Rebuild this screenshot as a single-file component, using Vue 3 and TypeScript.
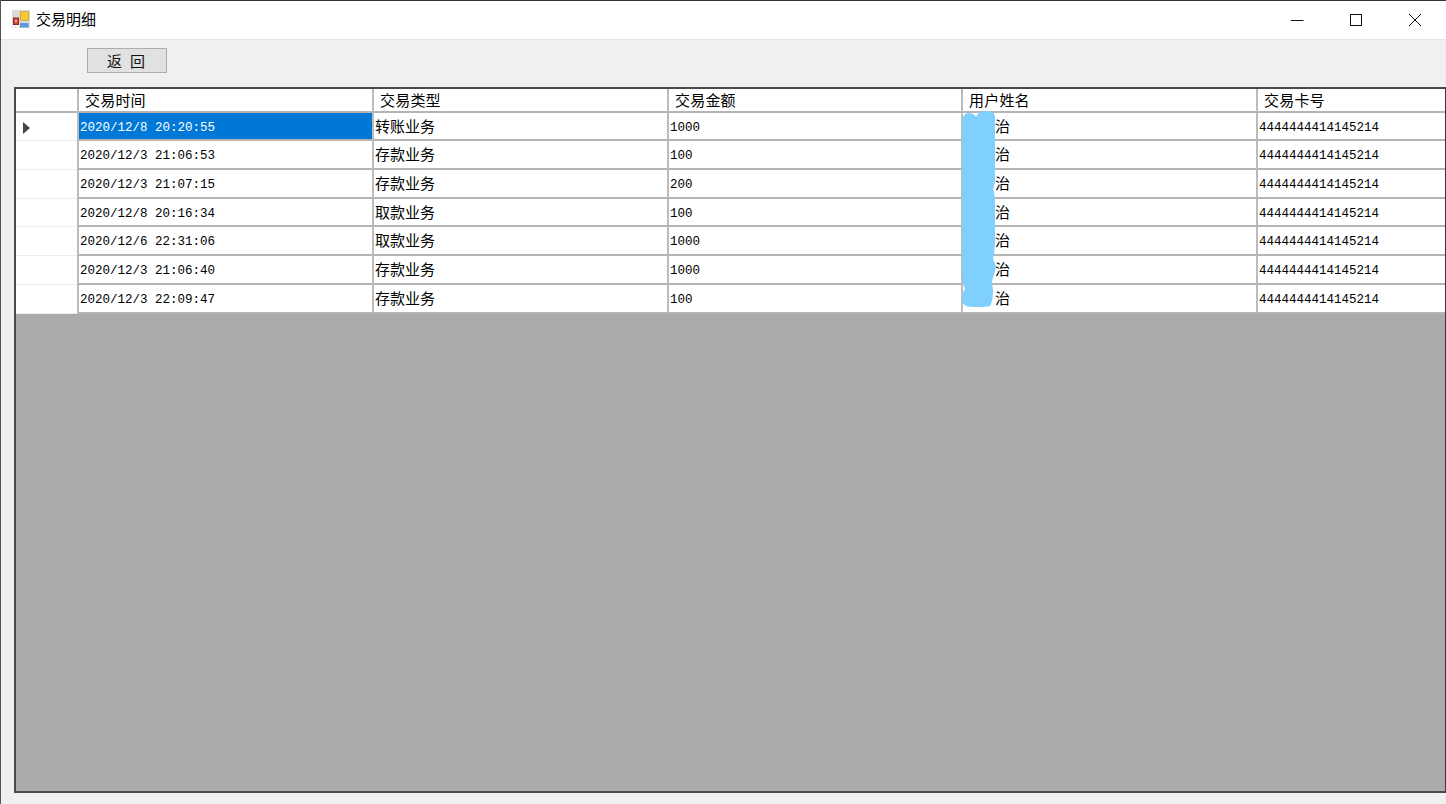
<script setup lang="ts">
interface Row { time: string; type: string; amount: string; name: string; card: string }
const headers: string[] = ['交易时间', '交易类型', '交易金额', '用户姓名', '交易卡号']
const rows: Row[] = [
  { time: '2020/12/8 20:20:55', type: '转账业务', amount: '1000', name: '治', card: '4444444414145214' },
  { time: '2020/12/3 21:06:53', type: '存款业务', amount: '100', name: '治', card: '4444444414145214' },
  { time: '2020/12/3 21:07:15', type: '存款业务', amount: '200', name: '治', card: '4444444414145214' },
  { time: '2020/12/8 20:16:34', type: '取款业务', amount: '100', name: '治', card: '4444444414145214' },
  { time: '2020/12/6 22:31:06', type: '取款业务', amount: '1000', name: '治', card: '4444444414145214' },
  { time: '2020/12/3 21:06:40', type: '存款业务', amount: '1000', name: '治', card: '4444444414145214' },
  { time: '2020/12/3 22:09:47', type: '存款业务', amount: '100', name: '治', card: '4444444414145214' },
]
</script>

<template>
  <div class="window">
    <header class="titlebar">
      <svg class="app-icon" width="18" height="18" viewBox="0 0 18 18">
        <rect x="0" y="0" width="18" height="18" fill="#dcdad2" />
        <rect x="0.5" y="14.5" width="3" height="3" fill="#fff" />
        <rect x="4" y="15" width="3" height="2.5" fill="#fff" />
        <rect x="1" y="7.5" width="6" height="7.5" fill="#8e2a26" />
        <rect x="2" y="8.5" width="4" height="5.5" fill="#d9423a" />
        <rect x="3" y="10" width="2" height="2" fill="#f0b0a8" />
        <rect x="8" y="1.5" width="9" height="9" fill="#b08a20" />
        <rect x="8.5" y="2" width="8" height="8" fill="#f6c832" />
        <rect x="8" y="13" width="8.5" height="4.5" fill="#5f97dd" />
      </svg>
      <span class="title">交易明细</span>
      <div class="controls">
        <svg class="ctl" width="58" height="37" viewBox="0 0 58 37"><path d="M22 19.5h12.5" stroke="#111" fill="none" /></svg>
        <svg class="ctl" width="58" height="37" viewBox="0 0 58 37"><rect x="23.5" y="13.5" width="11" height="11" stroke="#111" fill="none" /></svg>
        <svg class="ctl" width="59" height="37" viewBox="0 0 59 37"><path d="M24 13l12 12M36 13L24 25" stroke="#111" fill="none" /></svg>
      </div>
    </header>
    <div class="toolbar">
      <button class="back" type="button">返 回</button>
    </div>
    <section class="grid">
      <div class="row head">
        <div class="cell corner"></div>
        <div v-for="h in headers" :key="h" class="cell hcell">{{ h }}</div>
      </div>
      <div v-for="(r, i) in rows" :key="i" class="row body">
        <div class="cell rowhead"><span v-if="i === 0" class="caret"></span></div>
        <div class="cell mono" :class="{ selected: i === 0 }">{{ r.time }}</div>
        <div class="cell">{{ r.type }}</div>
        <div class="cell mono">{{ r.amount }}</div>
        <div class="cell name">{{ r.name }}</div>
        <div class="cell mono">{{ r.card }}</div>
      </div>
      <svg class="blob" width="36" height="198" viewBox="0 0 36 198">
        <path d="M0 9 Q1 3 6 2 Q12 2 14 6 Q16 0 24 0 Q32 0 33 5 L33 70 Q32 76 31 78 Q33 82 33 95 L33 125 Q33 140 31 148 Q33 152 34 156 Q32 164 30 170 L31 180 Q31 190 28 195 Q25 196 10 196 Q0 196 0 188 Q0 182 3 178 Q0 172 0 160 Z" fill="#7fcfff" />
      </svg>
    </section>
  </div>
</template>

<style>
html, body { margin: 0; padding: 0; background: #f0f0f0; }
</style>

<style scoped>
.window {
  width: 1446px;
  height: 804px;
  display: flex;
  flex-direction: column;
  box-sizing: border-box;
  border-left: 1px solid #5a5050;
  background: #f0f0f0;
  overflow: hidden;
  font-family: "Noto Sans CJK SC", "Liberation Sans", sans-serif;
  color: #000;
}
.titlebar {
  height: 40px;
  flex: none;
  background: #fff;
  display: flex;
  align-items: center;
  padding: 0 2px 2px 11px;
  border-bottom: 1px solid #e6e6e6;
  border-top: 1px solid #3a3230;
  box-sizing: border-box;
}
.app-icon { margin-right: 6px; }
.title { font-size: 15px; line-height: 20px; }
.controls { margin-left: auto; display: flex; }
.ctl { display: block; }
.toolbar {
  height: 47px;
  flex: none;
  padding: 8px 0 0 86px;
  box-sizing: border-box;
}
.back {
  width: 80px;
  height: 25px;
  padding: 0 2px 0 0;
  background: #e1e1e1;
  border: 1px solid #adadad;
  font: inherit;
  font-size: 15px;
  line-height: 21px;
  color: #111;
  word-spacing: 4.7px;
}
.grid {
  position: relative;
  margin-left: 13px;
  height: 706px;
  flex: none;
  box-sizing: border-box;
  background: #ababab;
  border: 2px solid #4a4a4a;
  border-right: 1px solid #3a3535;
  overflow: hidden;
}
.row {
  display: grid;
  grid-template-columns: 61px 295px 295px 294px 295px 1fr;
  background: #fff;
}
.head { height: 23.7px; }
.body { height: 28.7px; }
.cell {
  border-left: 2px solid #bcbcbc;
  border-bottom: 2px solid #b4b4b4;
  box-sizing: border-box;
  padding-left: 1px;
  font-size: 15px;
  line-height: 25px;
  white-space: nowrap;
  overflow: hidden;
}
.corner, .rowhead { border-left: 0; padding: 0; }
.rowhead { border-bottom: 1px solid #ececec; position: relative; }
.hcell { padding-left: 6px; line-height: 21px; letter-spacing: 0.2px; }
.mono { font-family: "Liberation Mono", monospace; font-size: 12.5px; line-height: 27px; padding-top: 2px; }
.selected { background: #0078d7; color: #fff; }
.caret {
  position: absolute;
  left: 7px;
  top: 9px;
  border-left: 7px solid #444;
  border-top: 6px solid transparent;
  border-bottom: 6px solid transparent;
}
.name { padding-left: 32px; }
.blob { position: absolute; left: 946px; top: 22px; }
</style>
